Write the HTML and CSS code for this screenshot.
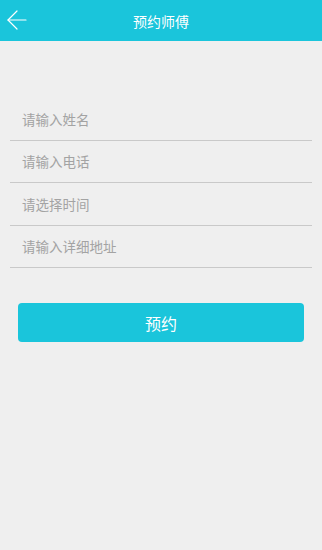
FILE: index.html
```html
<!DOCTYPE html>
<html lang="zh-CN">
<head>
<meta charset="utf-8">
<title>预约师傅</title>
<link rel="stylesheet" href="styles.css">
</head>
<body>
<header class="topbar">
  <span class="back">
    <svg width="20" height="20" viewBox="0 0 20 20" fill="none" stroke="#ffffff" stroke-width="1.2" stroke-linecap="round" stroke-linejoin="round">
      <path d="M1 10 H19"/>
      <path d="M10 1 L1 10 L10 19"/>
    </svg>
  </span>
  <h1 class="title">预约师傅</h1>
</header>
<main class="content">
  <form class="form">
    <div class="row"><span class="ph">请输入姓名</span></div>
    <div class="row"><span class="ph">请输入电话</span></div>
    <div class="row"><span class="ph">请选择时间</span></div>
    <div class="row"><span class="ph">请输入详细地址</span></div>
  </form>
  <div class="btn-wrap">
    <button type="button" class="submit">预约</button>
  </div>
</main>
</body>
</html>
```

FILE: styles.css
```css
* { box-sizing: border-box; }
html, body {
  margin: 0;
  padding: 0;
  background: #efefef;
  font-family: "Noto Sans CJK SC", "Noto Sans", sans-serif;
  width: 322px;
  height: 550px;
  overflow: hidden;
}
.topbar {
  height: 41px;
  background: #1ac5db;
  display: flex;
  align-items: center;
  justify-content: center;
  position: relative;
}
.back {
  position: absolute;
  left: 7px;
  top: 10px;
  width: 20px;
  height: 20px;
  display: block;
}
.back svg { display: block; }
.title {
  margin: 0;
  color: #ffffff;
  font-size: 14px;
  font-weight: 400;
  line-height: 20px;
}
.content {
  padding: 57px 10px 0 10px;
}
.form {
  display: flex;
  flex-direction: column;
  margin: 0;
  width: 302px;
}
.row {
  height: 42.5px;
  border-bottom: 1px solid #c9c9c9;
  display: flex;
  align-items: center;
  padding-left: 12px;
}
.ph {
  color: #a3a3a3;
  font-size: 13.5px;
  line-height: 18px;
}
.btn-wrap {
  padding: 35px 8px 0 8px;
}
.submit {
  display: block;
  width: 286px;
  height: 39px;
  border: none;
  border-radius: 4px;
  background: #1ac5db;
  color: #ffffff;
  font-family: "Noto Sans CJK SC", "Noto Sans", sans-serif;
  font-size: 16px;
  padding: 0;
}
```
